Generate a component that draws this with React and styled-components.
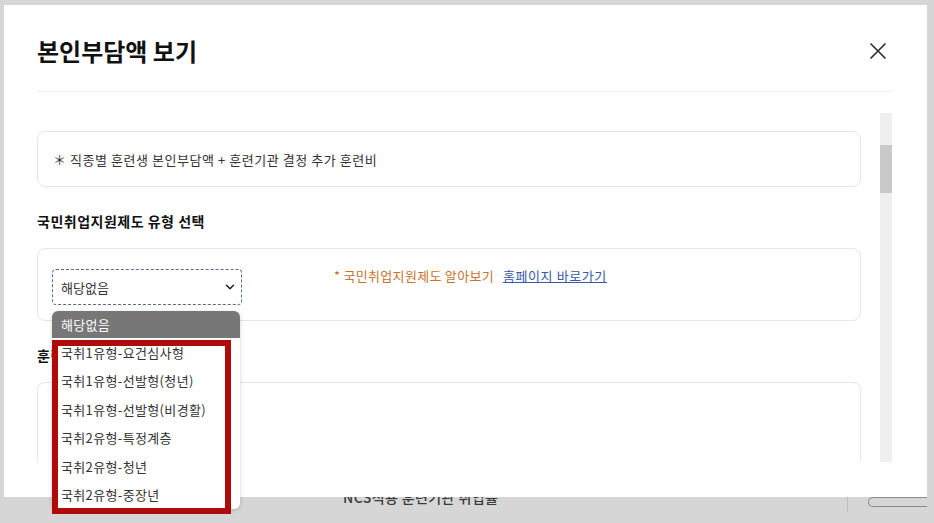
import React from "react";
import styled, { createGlobalStyle } from "styled-components";
import { ChevronDown } from "lucide-react";

const GlobalStyle = createGlobalStyle`
  html, body {
    margin: 0;
    padding: 0;
    background: #d6d6d6;
    font-family: "Noto Sans CJK KR", "Noto Sans", sans-serif;
  }
`;

const OPTIONS = [
  "국취1유형-요건심사형",
  "국취1유형-선발형(청년)",
  "국취1유형-선발형(비경활)",
  "국취2유형-특정계층",
  "국취2유형-청년",
  "국취2유형-중장년",
];

const App = () => {
  return (
    <Page>
      <GlobalStyle />
      <BehindBar>
        <BehindTitle>NCS적용 훈련기관 취업률</BehindTitle>
        <BehindDivider />
        <BehindButton />
      </BehindBar>

      <Modal>
        <Header>
          <Title>본인부담액 보기</Title>
          <CloseButton aria-label="close">
            <svg width="18" height="18" viewBox="0 0 18 18">
              <path d="M1.5 1.5 L16.5 16.5 M16.5 1.5 L1.5 16.5" stroke="#2b2b2b" strokeWidth="1.6" fill="none" />
            </svg>
          </CloseButton>
        </Header>

        <ScrollArea>
          <Content>
            <Box>
              <Note>＊ 직종별 훈련생 본인부담액 + 훈련기관 결정 추가 훈련비</Note>
            </Box>

            <SectionTitle>국민취업지원제도 유형 선택</SectionTitle>
            <Box $tall>
              <SelectRow>
                <Select>
                  <span>해당없음</span>
                  <ChevronDown size={14} strokeWidth={2.6} color="#222" />
                </Select>
                <Guide>
                  <GuideText>* 국민취업지원제도 알아보기</GuideText>
                  <GuideLink href="#">홈페이지 바로가기</GuideLink>
                </Guide>
              </SelectRow>
            </Box>

            <SectionTitle>훈련비 안내</SectionTitle>
            <Box $height={140} />
          </Content>
          <ScrollTrack>
            <ScrollThumb />
          </ScrollTrack>
        </ScrollArea>
      </Modal>

      <Dropdown>
        <DropHeader>해당없음</DropHeader>
        {OPTIONS.map(o => (
          <DropItem key={o}>{o}</DropItem>
        ))}
      </Dropdown>
      <Highlight />
    </Page>
  );
};

const Page = styled.div`
  position: relative;
  width: 934px;
  height: 523px;
  overflow: hidden;
  background: #d6d6d6;
`;

const BehindBar = styled.div`
  display: flex;
  align-items: flex-start;
  width: 927px;
  padding-top: 488px;
`;

const BehindTitle = styled.div`
  margin-left: 343px;
  font-size: 14px;
  font-weight: 500;
  line-height: 18px;
  color: #3a3a3a;
  letter-spacing: 0.4px;
`;

const BehindDivider = styled.div`
  width: 1px;
  height: 16px;
  margin: 8px 0 0 auto;
  background: #bdbdbd;
`;

const BehindButton = styled.div`
  width: 58px;
  height: 8px;
  margin: 9px 0 0 20px;
  border: 1px solid #8a8a8a;
  border-right: none;
  border-radius: 6px 0 0 6px;
`;

const Modal = styled.div`
  position: absolute;
  left: 4px;
  top: 5px;
  width: 923px;
  height: 492px;
  background: #fff;
  padding: 0 35px 0 33px;
  box-sizing: border-box;
`;

const Header = styled.div`
  display: flex;
  align-items: center;
  justify-content: space-between;
  height: 86px;
  border-bottom: 1px solid #f0f0f0;
`;

const Title = styled.h2`
  margin: 4px 0 0;
  font-size: 24px;
  font-weight: 700;
  color: #111;
  letter-spacing: 0;
`;

const CloseButton = styled.button`
  display: flex;
  margin: 6px 5px 0 0;
  padding: 0;
  border: none;
  background: none;
`;

const ScrollArea = styled.div`
  display: flex;
  height: 349px;
  margin-top: 21px;
  overflow: hidden;
`;

const Content = styled.div`
  flex: 1;
  padding: 18px 0 0;
  margin-right: 19px;
`;

const Box = styled.div`
  border: 1px solid #e6e6e6;
  border-radius: 8px;
  box-sizing: border-box;
  height: ${p => (p.$height ? `${p.$height}px` : p.$tall ? "73px" : "56px")};
  display: flex;
  align-items: ${p => (p.$tall ? "flex-start" : "center")};
  padding: ${p => (p.$tall ? "20px 14px 0" : "0 15px")};
`;

const Note = styled.div`
  font-size: 13px;
  color: #333;
  margin-top: 1px;
  letter-spacing: 0.55px;
`;

const SectionTitle = styled.h3`
  margin: 24px 0 17px;
  font-size: 14px;
  line-height: 20px;
  font-weight: 700;
  color: #111;
  letter-spacing: 0.5px;
`;

const SelectRow = styled.div`
  display: flex;
  align-items: flex-start;
`;

const Select = styled.div`
  display: flex;
  align-items: center;
  justify-content: space-between;
  width: 190px;
  height: 36px;
  box-sizing: border-box;
  padding: 0 4px 0 8px;
  border: 1px dashed #56698e;
  border-radius: 4px;
  font-size: 13px;
  color: #333;
`;

const Guide = styled.div`
  display: flex;
  gap: 9px;
  margin: -2px 0 0 92px;
  font-size: 13px;
  line-height: 18px;
  letter-spacing: 0.3px;
`;

const GuideText = styled.span`
  color: #c8742e;
`;

const GuideLink = styled.a`
  color: #3857a8;
  text-decoration: underline;
  letter-spacing: 0.6px;
`;

const ScrollTrack = styled.div`
  width: 12px;
  background: #efefef;
  display: flex;
  flex-direction: column;
`;

const ScrollThumb = styled.div`
  height: 48px;
  margin-top: 32px;
  background: #c9c9c9;
`;

const Dropdown = styled.div`
  position: absolute;
  left: 52px;
  top: 311px;
  width: 188px;
  background: #fff;
  border-radius: 6px;
  overflow: hidden;
  box-shadow: 0 1px 4px rgba(0, 0, 0, 0.18);
`;

const DropHeader = styled.div`
  height: 27px;
  padding-left: 9px;
  display: flex;
  align-items: center;
  background: #777;
  color: #fff;
  font-size: 13px;
  letter-spacing: 0.3px;
`;

const DropItem = styled.div`
  height: 28.5px;
  padding-left: 9px;
  display: flex;
  align-items: center;
  font-size: 13px;
  color: #333;
  letter-spacing: 0.35px;
`;

const Highlight = styled.div`
  position: absolute;
  left: 52px;
  top: 340px;
  width: 179px;
  height: 174px;
  box-sizing: border-box;
  border: 6px solid #b00b0b;
`;

export default App;
